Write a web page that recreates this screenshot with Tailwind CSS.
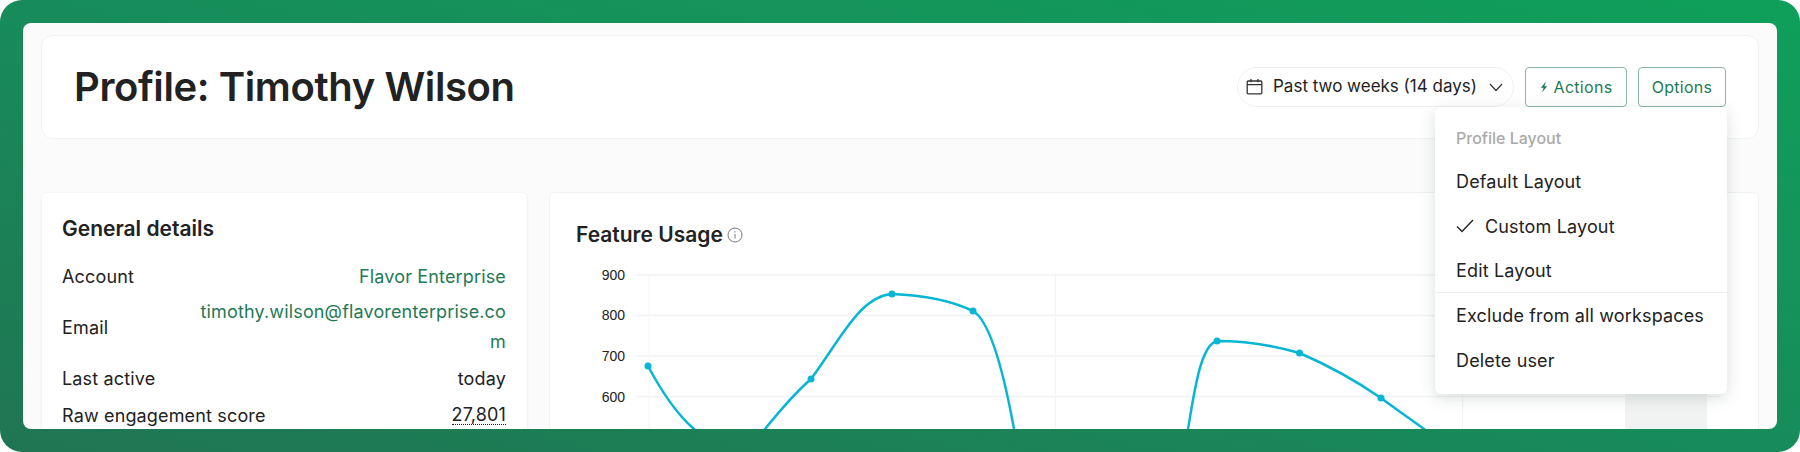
<!DOCTYPE html>
<html lang="en">
<head>
  <meta charset="UTF-8" />
  <title>Profile: Timothy Wilson</title>
  <script src="https://cdn.jsdelivr.net/npm/@tailwindcss/browser@4"></script>
</head>
<body class="bg-white overflow-hidden font-['Inter',sans-serif] text-[#222]">
  <div class="w-[1800px] h-[452px] rounded-[22px] p-[23px] bg-linear-to-tr from-[#1f7552] via-[#178c5a] to-[#0f9f5b]">
    <div class="relative h-[406px] rounded-[8px] bg-[#fbfbfb] overflow-hidden px-[18px] pt-[12px]">

      <!-- page header -->
      <div class="h-[104px] bg-white border border-[#f1f2f2] rounded-[12px] flex items-center justify-between pl-[32px] pr-[32px]">
        <h1 class="text-[40px] font-semibold tracking-[-0.4px] leading-none">Profile: Timothy Wilson</h1>
        <div class="flex items-center gap-[11px] -mt-[1px]">
          <button class="h-[40px] w-[277px] border border-[#eeefef] rounded-full flex items-center pl-[8px] pr-[10px] text-[17px]">
            <svg class="w-[17px] h-[17px] text-[#333]" viewBox="0 0 17 17" fill="none" stroke="currentColor" stroke-width="1.3"><rect x="1.2" y="3" width="14.6" height="12.8" rx="1"/><path d="M1.2 6.6h14.6M5 1v3.2M12 1v3.2"/></svg>
            <span class="ml-[10px] pt-[1px]">Past two weeks (14 days)</span>
            <svg class="w-[14px] h-[14px] ml-auto" viewBox="0 0 14 14" fill="none" stroke="#333" stroke-width="1.2"><path d="M1 4l6 6.500 6-6.500"/></svg>
          </button>
          <button class="h-[40px] w-[102px] border border-[#8db5a3] rounded-[4px] text-[16px] text-[#1f7a55] tracking-[0.3px] flex items-center justify-center gap-[6px]">
            <svg class="w-[8px] h-[12px]" viewBox="0 0 8 12" fill="#1f7a55"><path d="M6 0.500L0.800 6.800H3.600L2 11.500L7.200 5.200H4.400Z"/></svg>
            Actions
          </button>
          <button class="h-[40px] w-[88px] border border-[#8db5a3] rounded-[4px] text-[16px] text-[#1f7a55] tracking-[0.3px]">Options</button>
        </div>
      </div>

      <div class="grid grid-cols-[487px_1fr] gap-[21px] mt-[53px]">
        <!-- general details -->
        <div class="h-[300px] bg-white border border-[#f3f4f4] rounded-[6px] shadow-xs pl-[20px] pr-[21px] pt-[24px] text-[18px] tracking-[0.15px]">
          <h2 class="text-[21px] font-semibold leading-[24px] tracking-normal mb-[23px]">General details</h2>
          <div class="flex justify-between items-center h-[24px] mb-[9px]">
            <span>Account</span><span class="text-[#1f7a55]">Flavor Enterprise</span>
          </div>
          <div class="flex justify-between items-center mb-[9px]">
            <span>Email</span><span class="w-[306px] text-right text-[#1f7a55] leading-[30px] break-all">timothy.wilson@flavorenterprise.com</span>
          </div>
          <div class="flex justify-between items-center h-[24px] mb-[13px]">
            <span>Last active</span><span>today</span>
          </div>
          <div class="flex justify-between items-center h-[24px]">
            <span>Raw engagement score</span><span class="border-b border-dotted border-[#222] leading-[19px]">27,801</span>
          </div>
        </div>

        <!-- feature usage chart -->
        <div class="h-[300px] bg-white border border-[#f1f2f2] rounded-[6px]">
          <h2 class="flex items-center gap-[4px] text-[21px] font-semibold leading-[24px] tracking-normal ml-[26px] mt-[30px]">Feature Usage
            <svg class="w-[16px] h-[16px]" viewBox="0 0 16 16" fill="none" stroke="#777" stroke-width="1"><circle cx="8" cy="8" r="7"/><path d="M8 7v4.500M8 4.200v1.300"/></svg>
          </h2>
          <svg class="block mt-[19px]" width="1207" height="180" viewBox="550 266 1207 180" fill="none">
            <rect x="1625" y="394" width="82" height="50" fill="#f1f3f2"/>
            <g stroke="#f1f2f3" stroke-width="1.5">
              <path d="M636 275H1720M636 315.500H1720M636 356H1720M636 396.500H1720"/>
            </g>
            <g stroke="#f3f4f5" stroke-width="1">
              <path d="M649 275V440M1055.500 275V440M1462.500 275V440"/>
            </g>
            <g font-family="Liberation Sans, sans-serif" font-size="14" fill="#222" text-anchor="end">
              <text x="625" y="280">900</text>
              <text x="625" y="320">800</text>
              <text x="625" y="361">700</text>
              <text x="625" y="402">600</text>
            </g>
            <path stroke="#06b6d4" stroke-width="2.500" d="M648 366C664 396 680 417 694 429C710 445 750 445 765 429C782 408 796 392 811 379C840 340 860 296 892 294C920 295 950 300 973 311C992 322 1006 385 1014 429L1018 445M1184 445L1188 429C1194 395 1200 345 1217 341C1245 341 1275 346 1299.500 353C1325 364 1352 378 1381 398C1397 410 1412 420 1428 432L1440 442"/>
            <g fill="#06b6d4">
              <circle cx="648" cy="366" r="3.500"/><circle cx="811" cy="379" r="3.500"/><circle cx="892" cy="294" r="3.500"/><circle cx="973" cy="311" r="3.500"/><circle cx="1217" cy="341" r="3.500"/><circle cx="1299.500" cy="353" r="3.500"/><circle cx="1381" cy="398" r="3.500"/>
            </g>
          </svg>
        </div>
      </div>

      <!-- options menu -->
      <div class="absolute left-[1412px] top-[84px] w-[292px] h-[287px] bg-white rounded-[6px] shadow-[0_4px_16px_rgba(30,60,50,0.16)] text-[18px] tracking-[0.15px]">
        <div class="h-[52px] pt-[22px] px-[21px] text-[16px] leading-[18px] font-medium text-[#aaa] tracking-normal">Profile Layout</div>
        <div class="h-[45px] flex items-center px-[21px]">Default Layout</div>
        <div class="h-[44px] flex items-center px-[21px] gap-[11px]">
          <svg class="w-[18px] h-[14px]" viewBox="0 0 18 14" fill="none" stroke="#222" stroke-width="1.4"><path d="M1 7.500l5 5L17 1"/></svg>
          Custom Layout
        </div>
        <div class="h-[44px] flex items-center px-[21px]">Edit Layout</div>
        <div class="border-t border-[#eef0f0] h-[46px] flex items-center px-[21px]">Exclude from all workspaces</div>
        <div class="h-[44px] flex items-center px-[21px]">Delete user</div>
      </div>
    </div>
  </div>
</body>
</html>
